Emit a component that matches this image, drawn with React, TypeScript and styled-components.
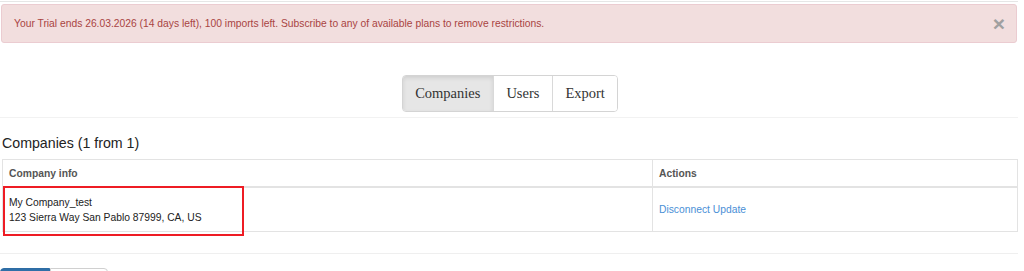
import styled, { createGlobalStyle } from 'styled-components';

const GlobalStyle = createGlobalStyle`
  body {
    margin: 0;
    background: #fff;
    font-family: "Liberation Sans", Arial, sans-serif;
    color: #333;
  }
`;

const Page = styled.div`
  width: 1018px;
  border-top: 1px solid #e6e6e6;
  margin-top: 1px;
`;

const Alert = styled.div`
  display: flex;
  align-items: center;
  justify-content: space-between;
  height: 39px;
  margin: 2px 1px 0 1px;
  padding: 0 11px 0 12px;
  box-sizing: border-box;
  background: #f2dede;
  border: 1px solid #ebccd1;
  border-radius: 3px;
  color: #a94442;
  font-size: 10.3px;
`;

const Close = styled.span`
  color: #a0a0a0;
  font-size: 21px;
  font-weight: 700;
  line-height: 1;
`;

const TabBar = styled.div`
  display: flex;
  justify-content: center;
  margin-top: 32px;
  padding-left: 2px;
  padding-bottom: 5px;
  border-bottom: 1px solid #f2f2f2;
`;

const TabGroup = styled.div`
  display: flex;
  border: 1px solid #d4d4d4;
  border-radius: 4px;
  overflow: hidden;
`;

const Tab = styled.button<{ $active?: boolean }>`
  height: 35px;
  padding: 0 12.5px;
  border: none;
  border-left: 1px solid #d9d9d9;
  &:first-child {
    border-left: none;
  }
  background: ${(p) => (p.$active ? '#e6e6e6' : '#fff')};
  box-shadow: ${(p) => (p.$active ? 'inset 0 2px 4px rgba(0,0,0,0.1)' : 'none')};
  font-family: "Liberation Serif", "Times New Roman", serif;
  font-size: 14.5px;
  color: #333;
`;

const Heading = styled.h3`
  margin: 16px 0 0 2px;
  font-size: 14.2px;
  font-weight: 400;
  color: #222;
  line-height: 18px;
`;

const Table = styled.table`
  width: 1016px;
  margin: 7px 0 0 2px;
  border-collapse: collapse;
  font-size: 10.3px;
`;

const HeadCell = styled.th<{ $w?: string }>`
  width: ${(p) => p.$w || 'auto'};
  height: 26px;
  padding: 0 6px;
  text-align: left;
  color: #555;
  font-weight: 700;
  border: 1px solid #e3e3e3;
  border-bottom: 2px solid #e3e3e3;
`;

const Cell = styled.td`
  position: relative;
  height: 43px;
  padding: 0 6px;
  border: 1px solid #e3e3e3;
  line-height: 15px;
  color: #222;
`;

const Highlight = styled.div`
  position: absolute;
  left: 0;
  top: -2px;
  width: 241px;
  height: 50px;
  box-sizing: border-box;
  border: 2px solid #ee1c24;
`;

const ActionLink = styled.a`
  color: #4a8fd6;
  text-decoration: none;
`;

const Divider = styled.div`
  height: 1px;
  margin-top: 21px;
  background: #efefef;
`;

const Pager = styled.div`
  display: flex;
  margin-top: 14px;
`;

const PagerButton = styled.div<{ $primary?: boolean }>`
  width: ${(p) => (p.$primary ? '50px' : '58px')};
  height: 20px;
  box-sizing: border-box;
  background: ${(p) => (p.$primary ? '#2f6fa8' : '#fff')};
  border: 1px solid ${(p) => (p.$primary ? '#2e6da4' : '#d0d0d0')};
  border-radius: ${(p) => (p.$primary ? '4px 0 0 4px' : '0 4px 4px 0')};
`;

export default function App() {
  return (
    <>
      <GlobalStyle />
      <Page>
        <Alert>
          <span>
            Your Trial ends 26.03.2026 (14 days left), 100 imports left. Subscribe to any of
            available plans to remove restrictions.
          </span>
          <Close>×</Close>
        </Alert>
        <TabBar>
          <TabGroup>
            <Tab $active>Companies</Tab>
            <Tab>Users</Tab>
            <Tab>Export</Tab>
          </TabGroup>
        </TabBar>
        <Heading>Companies (1 from 1)</Heading>
        <Table>
          <thead>
            <tr>
              <HeadCell $w="637px">Company info</HeadCell>
              <HeadCell>Actions</HeadCell>
            </tr>
          </thead>
          <tbody>
            <tr>
              <Cell>
                <Highlight />
                My Company_test
                <br />
                123 Sierra Way San Pablo 87999, CA, US
              </Cell>
              <Cell>
                <ActionLink href="#">Disconnect</ActionLink>{' '}
                <ActionLink href="#">Update</ActionLink>
              </Cell>
            </tr>
          </tbody>
        </Table>
        <Divider />
        <Pager>
          <PagerButton $primary />
          <PagerButton />
        </Pager>
      </Page>
    </>
  );
}
